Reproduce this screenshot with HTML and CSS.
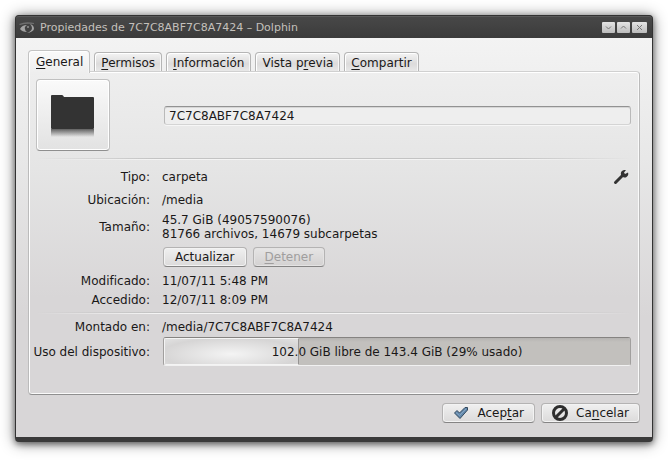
FILE: index.html
```html
<!DOCTYPE html>
<html lang="es">
<head>
    <meta charset="UTF-8">
    <meta name="viewport" content="width=device-width, initial-scale=1.0">
    <title>Propiedades de 7C7C8ABF7C8A7424 – Dolphin</title>
    <link rel="stylesheet" href="styles.css">
</head>
<body>

<div class="window">
    <header class="titlebar">
        <svg class="app-icon" viewBox="0 0 16 14" width="16" height="14">
            <path d="M0 3Q7 0 15 2V3Q7 2 1 4Z" fill="#707070"/>
            <path d="M1 8Q3 4 8 4Q5 6 6 8Q6 10 8 11Q3 11 1 8Z" fill="#a3a3a3"/>
            <path d="M11 3Q15 4 15 8Q14 11 8 12Q13 10 13 7Q13 5 11 3Z" fill="#a3a3a3"/>
            <circle cx="9" cy="6" r="1" fill="#909090"/>
        </svg>
        <h1 class="title">Propiedades de 7C7C8ABF7C8A7424 – Dolphin</h1>
        <div class="window-buttons">
            <button type="button" aria-label="Minimizar"><svg viewBox="0 0 7 7" width="7" height="7"><path d="M1 2.500L3.500 5L6 2.500"/></svg></button>
            <button type="button" aria-label="Maximizar"><svg viewBox="0 0 7 7" width="7" height="7"><path d="M1 4.500L3.500 2L6 4.500"/></svg></button>
            <button type="button" class="close" aria-label="Cerrar"><svg viewBox="0 0 7 7" width="7" height="7"><path d="M1 1L6 6M6 1L1 6"/></svg></button>
        </div>
    </header>

    <main class="content">
        <div class="tabs" role="tablist">
            <button type="button" class="tab active" role="tab" aria-selected="true"><u>G</u>eneral</button>
            <button type="button" class="tab" role="tab"><u>P</u>ermisos</button>
            <button type="button" class="tab" role="tab"><u>I</u>nformación</button>
            <button type="button" class="tab" role="tab">Vista p<u>r</u>evia</button>
            <button type="button" class="tab" role="tab"><u>C</u>ompartir</button>
        </div>

        <section class="panel">
            <div class="name-row">
                <button type="button" class="folder-button" aria-label="Cambiar icono">
                    <svg viewBox="0 0 46 44" width="46" height="44">
                        <defs>
                            <linearGradient id="reflection" x1="0" y1="0" x2="0" y2="1">
                                <stop offset="0" stop-color="#333" stop-opacity=".75"/>
                                <stop offset="1" stop-color="#333" stop-opacity="0"/>
                            </linearGradient>
                        </defs>
                        <path d="M1 3Q1 2 2 2H12Q13 2 14 4H43Q44 4 44 5V35Q44 36 43 36H2Q1 36 1 35Z" fill="#333"/>
                        <rect x="1" y="36" width="43" height="8" fill="url(#reflection)"/>
                    </svg>
                </button>
                <input type="text" class="name-input" aria-label="Nombre" value="7C7C8ABF7C8A7424">
            </div>

            <hr>

            <dl class="details">
                <dt>Tipo:</dt>
                <dd class="type-row">carpeta
                    <button type="button" class="wrench" aria-label="Editar tipo de archivo">
                        <svg viewBox="0 0 16 16" width="16" height="16">
                            <path d="M2.500 13.500L10 6" fill="none" stroke="#333" stroke-width="3" stroke-linecap="round"/>
                            <path d="M8 6Q7 2 11 1L13 1L11 3.500L12 5L15 3.500Q16 6 13.500 8Q12 9 10 8Z" fill="#333"/>
                        </svg>
                    </button>
                </dd>
                <dt>Ubicación:</dt>
                <dd>/media</dd>
                <dt>Tamaño:</dt>
                <dd class="size">45.7 GiB (49057590076)<br>81766 archivos, 14679 subcarpetas</dd>
                <dd class="actions">
                    <button type="button" class="button">Actualizar</button>
                    <button type="button" class="button" disabled><span><u>D</u>etener</span></button>
                </dd>
                <dt>Modificado:</dt>
                <dd>11/07/11 5:48 PM</dd>
                <dt>Accedido:</dt>
                <dd>12/07/11 8:09 PM</dd>
            </dl>

            <hr>

            <dl class="details device">
                <dt>Montado en:</dt>
                <dd>/media/7C7C8ABF7C8A7424</dd>
                <dt><label for="usage">Uso del dispositivo:</label></dt>
                <dd class="usage">
                    <progress id="usage" value="29" max="100"></progress>
                    <span class="usage-text">102.0 GiB libre de 143.4 GiB (29% usado)</span>
                </dd>
            </dl>
        </section>

        <footer class="dialog-buttons">
            <button type="button" class="button">
                <svg viewBox="0 0 16 16" width="16" height="16">
                    <path d="M1.500 8L4 5.500L6.500 8L12 2.500H14.500V5L7 13.500Z" fill="#6389ad" stroke="#33495d" stroke-linejoin="round"/>
                    <path d="M3 7.500L6.500 10.500L13 4" fill="none" stroke="#86a6c2"/>
                </svg>
                <span>Acep<u>t</u>ar</span>
            </button>
            <button type="button" class="button">
                <svg viewBox="0 0 16 16" width="16" height="16">
                    <circle cx="8" cy="8" r="6.500" fill="none" stroke="#2e2e2e" stroke-width="3"/>
                    <path d="M4 12L12 4" stroke="#2e2e2e" stroke-width="3"/>
                </svg>
                <span>Ca<u>n</u>celar</span>
            </button>
        </footer>
    </main>
</div>

</body>
</html>
```

FILE: styles.css
```css
* {
    box-sizing: border-box;
}
body {
    margin: 0;
    padding: 15px 15px 18px;
    background: #fff;
    color: #1a1818;
    font-family: "DejaVu Sans", sans-serif;
    font-size: 12px;
    line-height: 14px;
}
button,
input {
    font: inherit;
    color: inherit;
}
u {
    text-decoration-thickness: 1px;
    text-underline-offset: 2px;
    text-decoration-skip-ink: none;
}
svg {
    display: block;
    flex: none;
}

/* window frame */
.window {
    border: 1px solid #333;
    border-bottom: 5px solid #3a3a3a;
    border-radius: 4px;
    background: #3f3f3f;
    box-shadow: 0 2px 6px rgba(0,0,0,0.5), 0 1px 15px rgba(0,0,0,0.45);
}
.titlebar {
    display: flex;
    align-items: center;
    gap: 5px;
    height: 22px;
    padding: 0 5px 0 3px;
    border-top: 1px solid #5a5a5a;
    border-radius: 3px 3px 0 0;
    background: linear-gradient(#484848, #3b3b3b);
}
.title {
    flex: 1;
    margin: 0;
    color: #c4c0bc;
    font-size: 11px;
    font-weight: normal;
}
.window-buttons {
    display: flex;
    gap: 2px;
}
.window-buttons button {
    display: flex;
    align-items: center;
    justify-content: center;
    width: 13px;
    height: 11px;
    padding: 0;
    border: none;
    border-radius: 1px;
    background: linear-gradient(#e3e3e3, #bcbcbc);
}
.window-buttons .close {
    width: 15px;
}
.window-buttons path {
    fill: none;
    stroke: #777;
}
.content {
    padding: 12px 12px 14px;
    background: linear-gradient(#f3f3f3, #e8e8e8 30%, #d8d6d7 70%);
}

/* tabs */
.tabs {
    display: flex;
    align-items: flex-end;
    gap: 4px;
}
.tab {
    height: 19px;
    padding: 2px 6px 0;
    border: 1px solid #b5b5b5;
    border-bottom: none;
    border-radius: 4px 4px 0 0;
    background: linear-gradient(#f4f4f4, #dcdbdb 60%, #e8e8e8);
    box-shadow: inset 1px 1px #fff, inset -1px 0 #f6f6f6;
}
.tab.active {
    z-index: 1;
    height: 23px;
    margin-bottom: -2px;
    padding: 0 6px 0 7px;
    border-color: #c3c3c3;
    background: linear-gradient(#fafafa, #eeeeee);
}
.panel {
    padding: 7px 8px 28px 7px;
    border: 1px solid #bbb;
    border-top-color: #d0d0d0;
    border-bottom-color: #8f8f8f;
    border-radius: 0 4px 4px 4px;
    background: linear-gradient(#eeeeee, #e5e5e5 30%, #d8d6d7 70%);
    box-shadow: inset 0 1px #fff, inset 1px 0 #fff, inset -1px -1px #fafafa;
}

/* icon and name */
.name-row {
    display: flex;
    align-items: center;
    gap: 54px;
    padding-bottom: 2px;
}
.folder-button {
    display: flex;
    align-items: center;
    justify-content: center;
    width: 74px;
    height: 72px;
    padding: 0;
    border: 1px solid #c0c0c0;
    border-bottom-color: #8f8f8f;
    border-radius: 4px;
    background: linear-gradient(#fafafa, #e2e2e2);
    box-shadow: inset 0 0 0 1px #fff;
}
.name-input {
    flex: 1;
    min-width: 0;
    height: 19px;
    padding: 1px 4px 0;
    border: 1px solid #b9b9b9;
    border-top-color: #929292;
    border-bottom-color: #d4d4d4;
    border-radius: 3px;
    background: #eeeeee;
    box-shadow: inset 0 1px #d6d6d6, 0 1px #f6f6f6;
}
hr {
    height: 2px;
    margin: 5px 0 6px;
    border: none;
    background: linear-gradient(90deg, transparent, #c3c3c3 20%, #c3c3c3 80%, transparent) top / 100% 1px no-repeat,
                linear-gradient(90deg, transparent, #f4f4f4 20%, #f4f4f4 80%, transparent) bottom / 100% 1px no-repeat;
}

/* property rows */
.details {
    display: grid;
    grid-template-columns: 114px 1fr;
    gap: 5px 12px;
    align-items: center;
    margin: 0;
}
.details dt {
    display: flex;
    justify-content: flex-end;
    white-space: nowrap;
}
.details dd {
    margin: 0;
}
.details .type-row {
    display: flex;
    align-items: center;
    justify-content: space-between;
    height: 22px;
}
.wrench {
    padding: 2px;
    border: none;
    background: none;
}
.size {
    padding: 1px 0;
}
.actions {
    grid-column: 2;
    display: flex;
    gap: 6px;
    padding: 0 1px 2px;
}
.button {
    display: flex;
    align-items: center;
    justify-content: center;
    gap: 8px;
    height: 20px;
    padding: 0 11px;
    border: 1px solid #b4b3b3;
    border-bottom-color: #858484;
    border-radius: 4px;
    background: linear-gradient(#f0f0f0, #dbdada);
    box-shadow: inset 0 0 0 1px #f3f3f3;
}
.button:disabled {
    color: #a09e9e;
    background: linear-gradient(#e6e5e5, #d3d1d1);
    box-shadow: inset 0 0 0 1px #e4e3e3;
}
.device {
    row-gap: 3px;
}

/* disk usage */
.usage {
    display: grid;
    align-items: center;
    padding-left: 1px;
}
.usage progress,
.usage-text {
    grid-area: 1 / 1;
}
.usage-text {
    text-align: center;
}
.usage progress {
    appearance: none;
    width: 100%;
    height: 29px;
    border: 1px solid #a19f9e;
    border-top-color: #858381;
    border-bottom-color: #f1f1f1;
    border-radius: 3px;
    overflow: hidden;
}
.usage progress::-webkit-progress-bar {
    background: linear-gradient(#b5b3b1, #c2c0bd 4px);
}
.usage progress::-webkit-progress-value {
    border: 1px solid #f4f4f4;
    border-right-color: #959392;
    background: radial-gradient(ellipse at 50% 60%, #f4f4f4, #d6d5d5 75%, #e2e2e2);
}

/* dialog buttons */
.dialog-buttons {
    display: flex;
    justify-content: flex-end;
    gap: 6px;
    padding-top: 8px;
}
.dialog-buttons .button {
    padding: 0 10px;
}
```
